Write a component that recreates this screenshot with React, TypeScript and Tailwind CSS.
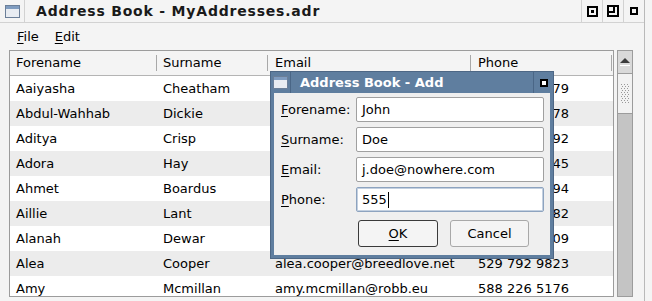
import { useState } from 'react';

interface Contact {
  forename: string;
  surname: string;
  email: string;
  phone: string;
}

const contacts: Contact[] = [
  { forename: 'Aaiyasha', surname: 'Cheatham', email: 'aaiyasha.cheatham@mail.com', phone: '563 104 1879' },
  { forename: 'Abdul-Wahhab', surname: 'Dickie', email: 'abdul.dickie@example.org', phone: '412 660 2378' },
  { forename: 'Aditya', surname: 'Crisp', email: 'aditya.crisp@crisp.co.uk', phone: '371 285 4092' },
  { forename: 'Adora', surname: 'Hay', email: 'adora.hay@hayfield.net', phone: '624 930 7145' },
  { forename: 'Ahmet', surname: 'Boardus', email: 'ahmet.boardus@boardus.com', phone: '508 112 6394' },
  { forename: 'Aillie', surname: 'Lant', email: 'aillie.lant@lant.org', phone: '447 803 5182' },
  { forename: 'Alanah', surname: 'Dewar', email: 'alanah.dewar@dewar.info', phone: '389 571 2609' },
  { forename: 'Alea', surname: 'Cooper', email: 'alea.cooper@breedlove.net', phone: '529 792 9823' },
  { forename: 'Amy', surname: 'Mcmillan', email: 'amy.mcmillan@robb.eu', phone: '588 226 5176' },
];

function WindowIcon({ className }: { className?: string }) {
  return (
    <svg width="15" height="13" viewBox="0 0 15 13" className={className}>
      <rect x="0.5" y="0.5" width="14" height="12" fill="#e8ecf2" stroke="#6b7f99" />
      <rect x="1" y="1" width="13" height="3" fill="#7f9cc0" />
    </svg>
  );
}

function Field({ label, accel, value, focused }: { label: string; accel: string; value: string; focused?: boolean }) {
  return (
    <div className="flex items-center h-[25px]">
      <div className="w-[82px] pl-[7px]">
        <span className="underline underline-offset-2">{accel}</span>
        {label}
      </div>
      <div
        className={`flex-1 h-[25px] rounded-[2px] bg-white flex items-center px-[5px] ${
          focused ? 'border border-[#8da3bf] shadow-[inset_0_0_0_1px_#c3d0e0]' : 'border border-[#a0a0a0]'
        }`}
      >
        {value}
        {focused && <span className="inline-block w-px h-[16px] bg-black ml-px" />}
      </div>
    </div>
  );
}

export default function App() {
  const [rows] = useState(contacts);

  return (
    <div
      className="relative w-[652px] h-[301px] overflow-hidden bg-[#f4f4f4] text-[13px] text-black"
      style={{ fontFamily: '"DejaVu Sans", "Liberation Sans", sans-serif' }}
    >
      <div className="w-[645px] h-full flex flex-col border-r border-[#b9b9b9] pb-[4px]">
        {/* title bar */}
        <div className="h-[23px] flex items-center border-b border-[#d2d2d2]">
          <div className="w-[25px] h-full flex items-center justify-center border-r border-[#d2d2d2]">
            <WindowIcon />
          </div>
          <div className="pl-[11px] font-bold text-[14px] tracking-[0.8px] text-[#1a1a1a]">
            Address Book - MyAddresses.adr
          </div>
          <div className="ml-auto flex h-full">
            <div className="w-[21px] h-full flex items-center justify-center border-l border-[#d2d2d2]">
              <div className="w-[11px] h-[11px] border-2 border-black flex items-center justify-center">
                <div className="w-[3px] h-[3px] bg-black" />
              </div>
            </div>
            <div className="w-[21px] h-full flex items-center justify-center border-l border-[#d2d2d2]">
              <div className="w-[12px] h-[12px] border-2 border-black relative">
                <div className="absolute right-[2px] top-0 w-[2px] h-[6px] bg-black" />
                <div className="absolute right-[2px] top-[4px] w-[6px] h-[2px] bg-black" />
              </div>
            </div>
            <div className="w-[21px] h-full flex items-center justify-center border-l border-[#d2d2d2]">
              <div className="w-[8px] h-[8px] border-2 border-black" />
            </div>
          </div>
        </div>

        {/* menu bar */}
        <div className="h-[25px] mt-px flex items-center gap-[16px] pl-[17px]">
          <span>
            <span className="underline underline-offset-2">F</span>ile
          </span>
          <span>
            <span className="underline underline-offset-2">E</span>dit
          </span>
        </div>

        {/* table + scrollbar */}
        <div className="flex flex-1 pl-[9px] pt-[1px] min-h-0">
          <div className="w-[605px] h-full border border-[#9c9c9c] bg-white overflow-hidden">
            <div className="h-[25px] flex items-center bg-[#f4f4f4] border-b border-[#b4b4b4]">
              <div className="w-[146px] pl-[6px]">Forename</div>
              <div className="w-px h-[16px] bg-[#a8a8a8]" />
              <div className="w-[110px] pl-[6px]">Surname</div>
              <div className="w-px h-[16px] bg-[#a8a8a8]" />
              <div className="w-[202px] pl-[7px]">Email</div>
              <div className="w-px h-[16px] bg-[#a8a8a8]" />
              <div className="w-[140px] pl-[7px]">Phone</div>
              <div className="w-px h-[16px] bg-[#a8a8a8]" />
            </div>
            {rows.map((c, i) => (
              <div key={c.forename} className={`h-[25px] flex items-center ${i % 2 ? 'bg-[#ececec]' : 'bg-white'}`}>
                <div className="w-[147px] pl-[6px]">{c.forename}</div>
                <div className="w-[111px] pl-[6px]">{c.surname}</div>
                <div className="w-[203px] pl-[7px] whitespace-nowrap">{c.email}</div>
                <div className="w-[141px] pl-[7px] whitespace-nowrap">{c.phone}</div>
              </div>
            ))}
          </div>

          {/* scrollbar */}
          <div className="ml-[3px] w-[16px] h-full border border-[#9c9c9c] bg-[#c4c4c4] flex flex-col">
            <div className="h-[23px] bg-[#d9d9d9] border-b border-[#9c9c9c] flex flex-col items-center justify-center">
              <div className="w-0 h-0 border-l-[5px] border-r-[5px] border-b-[5px] border-l-transparent border-r-transparent border-b-[#3c3c3c]" />
              <div className="w-[10px] h-px bg-white mt-[2px]" />
            </div>
            <div className="h-[40px] bg-[#f2f2f2] border-b border-[#9c9c9c] flex items-center justify-center">
              <svg width="8" height="20" viewBox="0 0 8 20">
                {Array.from({ length: 10 }).map((_, r) =>
                  [0, 1, 2].map((k) => (
                    <rect key={`${r}-${k}`} x={(r % 2) + k * 3} y={r * 2} width="1" height="1" fill="#9a9a9a" />
                  ))
                )}
              </svg>
            </div>
          </div>
        </div>
      </div>

      {/* add dialog */}
      <div className="absolute left-[271px] top-[72px] w-[282px] h-[186px] border-[3px] border-[#5f7e9f] bg-[#efefef] flex flex-col shadow-[0_0_0_1px_#4d6785]">
        <div className="h-[21px] -mx-[3px] -mt-[3px] bg-[#5f7e9f] flex items-center">
          <div className="w-[20px] h-full flex items-center justify-center border-r border-[#4a6686]">
            <WindowIcon />
          </div>
          <div className="pl-[9px] font-bold text-white">Address Book - Add</div>
          <div className="ml-auto w-[20px] h-full flex items-center justify-center border-l border-[#4a6686]">
            <div className="w-[8px] h-[8px] border-2 border-black bg-white" />
          </div>
        </div>
        <div className="flex flex-col gap-[5px] pr-[6px] pt-[4px]">
          <Field accel="F" label="orename:" value="John" />
          <Field accel="S" label="urname:" value="Doe" />
          <Field accel="E" label="mail:" value="j.doe@nowhere.com" />
          <Field accel="P" label="hone:" value="555" focused />
        </div>
        <div className="flex gap-[12px] pl-[84px] mt-[8px]">
          <div className="w-[80px] h-[27px] rounded-[3px] border border-[#3a3a3a] bg-[#f4f4f4] flex items-center justify-center">
            <span>
              <span className="underline underline-offset-2">O</span>K
            </span>
          </div>
          <div className="w-[79px] h-[27px] rounded-[3px] border border-[#a8a8a8] bg-[#f4f4f4] flex items-center justify-center">
            Cancel
          </div>
        </div>
      </div>
    </div>
  );
}
